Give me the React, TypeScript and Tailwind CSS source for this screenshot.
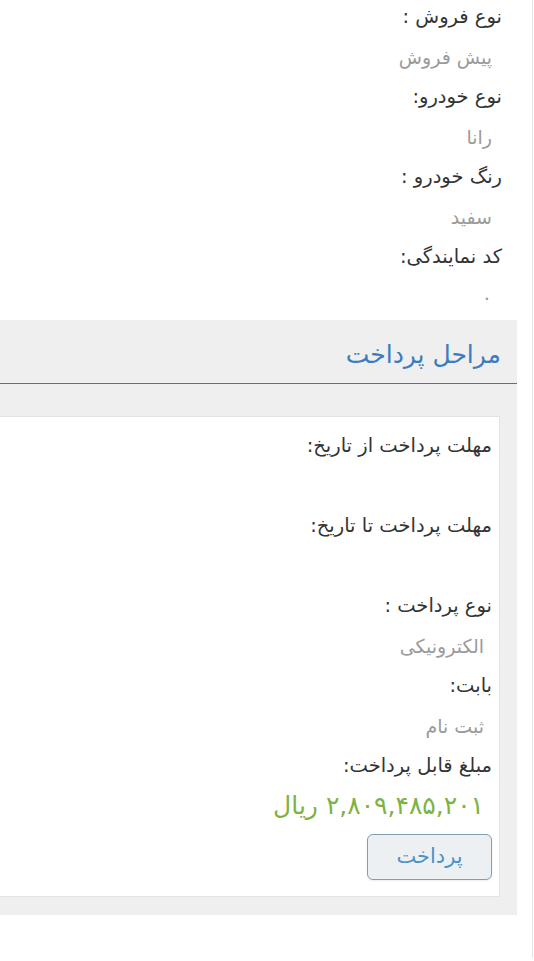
import React from "react";

const font = { fontFamily: '"DejaVu Sans", "Noto Sans", sans-serif' };

function Field({ label, value, indent = "pr-[10px]" }: { label: string; value?: string; indent?: string }) {
  return (
    <div>
      <div className="h-[40px] flex items-center text-[19.5px] text-[#333]">{label}</div>
      <div className={`h-[40px] flex items-center text-[19px] text-[#9a9a9a] ${indent}`}>{value ?? ""}</div>
    </div>
  );
}

export default function App() {
  return (
    <div style={font} className="w-[534px] h-[961px] overflow-hidden bg-white">
      <div dir="rtl" className="w-[533px] h-full border-r border-[#e4e4e4]">
        {/* top fields */}
        <div className="pr-[30px] -mt-[3px]">
          <Field label="نوع فروش :" value="پیش فروش" />
          <Field label="نوع خودرو:" value="رانا" />
          <Field label="رنگ خودرو :" value="سفید" />
          <Field label="کد نمایندگی:" value="۰" />
        </div>

        {/* payment panel */}
        <div className="mr-[15px] mt-[3px] bg-[#efefef] pb-[18px]">
          <div className="h-[64px] flex items-center pr-[16px] pt-[6px] border-b border-[#3f74b8] text-[25px] text-[#3a7cc0]">
            مراحل پرداخت
          </div>
          <div className="mt-[32px] ml-[-2px] mr-[17px] bg-white border border-[#e3e3e3] h-[481px] pr-[7px] pt-[9px]">
            <Field label="مهلت پرداخت از تاریخ:" indent="pr-[8px]" />
            <Field label="مهلت پرداخت تا تاریخ:" indent="pr-[8px]" />
            <Field label="نوع پرداخت :" value="الکترونیکی" indent="pr-[8px]" />
            <Field label="بابت:" value="ثبت نام" indent="pr-[8px]" />
            <div className="h-[40px] flex items-center text-[19.5px] text-[#333]">مبلغ قابل پرداخت:</div>
            <div className="h-[40px] flex items-center pr-[8px] text-[25px] text-[#7cb342]">۲,۸۰۹,۴۸۵,۲۰۱ ریال</div>
            <div className="mt-[8px]">
              <button
                style={font}
                className="w-[125px] h-[46px] rounded-[6px] border border-[#7f9fb8] bg-[#edf0f3] text-[21px] text-[#4b93c6] shadow-[0_1px_2px_rgba(0,0,0,0.08)]"
              >
                پرداخت
              </button>
            </div>
          </div>
        </div>
      </div>
    </div>
  );
}
